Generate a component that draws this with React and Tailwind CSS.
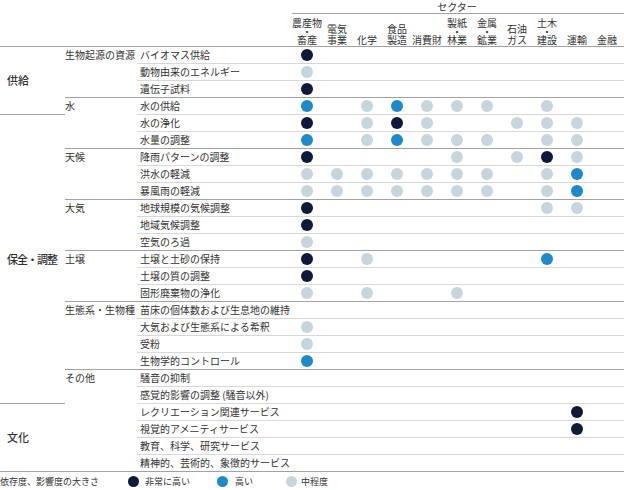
import React from "react";

const DOT = {
  3: "bg-[#0e1a3b]",
  2: "bg-[#1d8bcb]",
  1: "bg-[#c6d6df]",
};

const sectors = [
  ["農産物", "・", "畜産"],
  ["電気", "事業"],
  ["化学"],
  ["食品", "製造"],
  ["消費財"],
  ["製紙", "・", "林業"],
  ["金属", "・", "鉱業"],
  ["石油", "ガス"],
  ["土木", "・", "建設"],
  ["運輸"],
  ["金融"],
];

const tops = [
  { label: "供給", h: "h-[68px] border-b" },
  { label: "保全・調整", h: "h-[289px] border-b tracking-[-1px]" },
  { label: "文化", h: "flex-1" },
];

// each row: name + 11 chars, one per sector (3 = 非常に高い, 2 = 高い, 1 = 中程度)
const groups = [
  {
    label: "生物起源の資源",
    rows: [
      ["バイオマス供給", "3----------"],
      ["動物由来のエネルギー", "1----------"],
      ["遺伝子試料", "3----------"],
    ],
  },
  {
    label: "水",
    rows: [
      ["水の供給", "2-12111-1--"],
      ["水の浄化", "3-131--111-"],
      ["水量の調整", "2-12111-11-"],
    ],
  },
  {
    label: "天候",
    rows: [
      ["降雨パターンの調整", "3----1-131-"],
      ["洪水の軽減", "1111111-12-"],
      ["暴風雨の軽減", "1111111-12-"],
    ],
  },
  {
    label: "大気",
    rows: [
      ["地球規模の気候調整", "3-------11-"],
      ["地域気候調整", "3----------"],
      ["空気のろ過", "1----------"],
    ],
  },
  {
    label: "土壌",
    rows: [
      ["土壌と土砂の保持", "3-1-----2--"],
      ["土壌の質の調整", "3----------"],
      ["固形廃棄物の浄化", "1-1--1-----"],
    ],
  },
  {
    label: "生態系・生物種",
    rows: [
      ["苗床の個体数および生息地の維持", "-----------"],
      ["大気および生態系による希釈", "1----------"],
      ["受粉", "1----------"],
      ["生物学的コントロール", "2----------"],
    ],
  },
  {
    label: "その他",
    rows: [
      ["騒音の抑制", "-----------"],
      ["感覚的影響の調整 (騒音以外)", "-----------"],
      ["レクリエーション関連サービス", "---------3-"],
      ["視覚的アメニティサービス", "---------3-"],
      ["教育、科学、研究サービス", "-----------"],
      ["精神的、芸術的、象徴的サービス", "-----------"],
    ],
  },
];

function SectorLabel({ lines }) {
  if (lines.length === 3) {
    return (
      <div className="flex flex-col items-center">
        <span className="leading-[10px]">{lines[0]}</span>
        <span className="leading-[7px]">{lines[1]}</span>
        <span className="leading-[10px]">{lines[2]}</span>
      </div>
    );
  }
  return (
    <div className="flex flex-col items-center">
      {lines.map((l, i) => (
        <span key={i} className={i === lines.length - 1 ? "leading-[10px]" : "leading-[13px]"}>
          {l}
        </span>
      ))}
    </div>
  );
}

function Row({ name, marks }) {
  return (
    <div className="flex h-[17px] border-b border-[#d9d9d9] last:h-[16px] last:border-b-0">
      <div className="w-[155px] pl-[3px] leading-[16px] whitespace-nowrap">{name}</div>
      {marks.split("").map((m, i) => (
        <div key={i} className="w-[30px] flex items-center justify-center">
          {m !== "-" && <span className={`block w-[12px] h-[12px] rounded-full ${DOT[m]}`} />}
        </div>
      ))}
    </div>
  );
}

export default function App() {
  return (
    <div className="w-[624px] h-[490px] bg-white text-[#333] text-[10px] font-['Noto_Sans_CJK_JP',sans-serif] overflow-hidden">
      {/* header */}
      <div className="flex h-[46px]">
        <div className="w-[292px]" />
        <div className="w-[332px] flex flex-col">
          <div className="h-[14px] pt-[1px] leading-[12px] text-center border-b border-[#a3a3a3] pr-[2px]">セクター</div>
          <div className="flex flex-1">
            {sectors.map((s, i) => (
              <div key={i} className="w-[30px] flex flex-col justify-end items-center pb-[1px] whitespace-nowrap">
                <SectorLabel lines={s} />
              </div>
            ))}
          </div>
        </div>
      </div>

      {/* table */}
      <div className="flex border-y border-[#a3a3a3]">
        <div className="w-[65px] flex flex-col">
          {tops.map((t) => (
            <div
              key={t.label}
              className={`${t.h} border-[#a3a3a3] flex items-center pl-[7px] text-[11px] font-medium whitespace-nowrap`}
            >
              {t.label}
            </div>
          ))}
        </div>
        <div className="flex-1 flex flex-col">
          {groups.map((g) => (
            <div key={g.label} className="flex border-b border-[#a3a3a3] last:border-b-0">
              <div className="w-[72px] leading-[16px] whitespace-nowrap">{g.label}</div>
              <div className="flex-1 flex flex-col">
                {g.rows.map(([name, marks]) => (
                  <Row key={name} name={name} marks={marks} />
                ))}
              </div>
            </div>
          ))}
        </div>
      </div>

      {/* legend */}
      <div className="flex items-center h-[19px] text-[9px]">
        <div className="w-[128px] whitespace-nowrap">依存度、影響度の大きさ</div>
        <div className="w-[89px] flex items-center gap-[6px]">
          <span className="block w-[11px] h-[11px] rounded-full bg-[#0e1a3b]" />
          <span>非常に高い</span>
        </div>
        <div className="w-[69px] flex items-center gap-[7px]">
          <span className="block w-[11px] h-[11px] rounded-full bg-[#1d8bcb]" />
          <span>高い</span>
        </div>
        <div className="flex items-center gap-[4px]">
          <span className="block w-[11px] h-[11px] rounded-full bg-[#c6d6df]" />
          <span>中程度</span>
        </div>
      </div>
    </div>
  );
}
